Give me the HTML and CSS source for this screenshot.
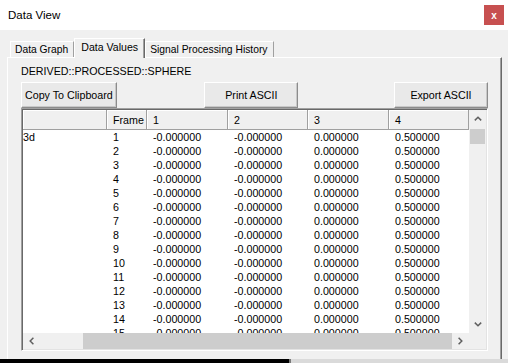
FILE: index.html
```html
<!DOCTYPE html>
<html lang="en">
<head>
    <meta charset="UTF-8">
    <title>Data View</title>
    <link rel="stylesheet" href="styles.css">
</head>
<body>
    <div class="window">
        <div class="titlebar">
            <span class="title">Data View</span>
            <span class="close">x</span>
        </div>

        <div class="client">
            <div class="tabs">
                <div class="tab">Data Graph</div>
                <div class="tab active">Data Values</div>
                <div class="tab">Signal Processing History</div>
            </div>

            <div class="panel">
                <div class="path">DERIVED::PROCESSED::SPHERE</div>

                <div class="toolbar">
                    <button class="btn">Copy To Clipboard</button>
                    <button class="btn print">Print ASCII</button>
                    <button class="btn">Export ASCII</button>
                </div>

                <div class="grid">
                    <div class="grid-main">
                        <div class="grid-view">
                            <table class="values">
                                <colgroup>
                                    <col class="c-name">
                                    <col class="c-frame">
                                    <col class="c-val">
                                    <col class="c-val">
                                    <col class="c-val">
                                    <col class="c-val">
                                </colgroup>
                                <thead>
                                    <tr><th></th><th>Frame</th><th>1</th><th>2</th><th>3</th><th>4</th></tr>
                                </thead>
                                <tbody>
                                    <tr><td>3d</td><td>1</td><td>-0.000000</td><td>-0.000000</td><td>0.000000</td><td>0.500000</td></tr>
                                    <tr><td></td><td>2</td><td>-0.000000</td><td>-0.000000</td><td>0.000000</td><td>0.500000</td></tr>
                                    <tr><td></td><td>3</td><td>-0.000000</td><td>-0.000000</td><td>0.000000</td><td>0.500000</td></tr>
                                    <tr><td></td><td>4</td><td>-0.000000</td><td>-0.000000</td><td>0.000000</td><td>0.500000</td></tr>
                                    <tr><td></td><td>5</td><td>-0.000000</td><td>-0.000000</td><td>0.000000</td><td>0.500000</td></tr>
                                    <tr><td></td><td>6</td><td>-0.000000</td><td>-0.000000</td><td>0.000000</td><td>0.500000</td></tr>
                                    <tr><td></td><td>7</td><td>-0.000000</td><td>-0.000000</td><td>0.000000</td><td>0.500000</td></tr>
                                    <tr><td></td><td>8</td><td>-0.000000</td><td>-0.000000</td><td>0.000000</td><td>0.500000</td></tr>
                                    <tr><td></td><td>9</td><td>-0.000000</td><td>-0.000000</td><td>0.000000</td><td>0.500000</td></tr>
                                    <tr><td></td><td>10</td><td>-0.000000</td><td>-0.000000</td><td>0.000000</td><td>0.500000</td></tr>
                                    <tr><td></td><td>11</td><td>-0.000000</td><td>-0.000000</td><td>0.000000</td><td>0.500000</td></tr>
                                    <tr><td></td><td>12</td><td>-0.000000</td><td>-0.000000</td><td>0.000000</td><td>0.500000</td></tr>
                                    <tr><td></td><td>13</td><td>-0.000000</td><td>-0.000000</td><td>0.000000</td><td>0.500000</td></tr>
                                    <tr><td></td><td>14</td><td>-0.000000</td><td>-0.000000</td><td>0.000000</td><td>0.500000</td></tr>
                                    <tr><td></td><td>15</td><td>-0.000000</td><td>-0.000000</td><td>0.000000</td><td>0.500000</td></tr>
                                </tbody>
                            </table>
                        </div>

                        <div class="vscroll">
                            <div class="arrow">
                                <svg width="8" height="5" viewBox="0 0 8 5"><polyline points="0.8,4.4 4,1.2 7.2,4.4"/></svg>
                            </div>
                            <div class="vtrack"><div class="vthumb"></div></div>
                            <div class="arrow">
                                <svg width="8" height="5" viewBox="0 0 8 5"><polyline points="0.8,0.6 4,3.8 7.2,0.6"/></svg>
                            </div>
                        </div>
                    </div>

                    <div class="hscroll-row">
                        <div class="hscroll">
                            <div class="arrow">
                                <svg width="5" height="8" viewBox="0 0 5 8"><polyline points="4.4,0.8 1.2,4 4.4,7.2"/></svg>
                            </div>
                            <div class="htrack"><div class="hthumb"></div></div>
                            <div class="arrow">
                                <svg width="5" height="8" viewBox="0 0 5 8"><polyline points="0.6,0.8 3.8,4 0.6,7.2"/></svg>
                            </div>
                        </div>
                        <div class="corner"></div>
                    </div>
                </div>
            </div>
        </div>

        <div class="taskbar">
            <div class="task-dark"></div>
            <div class="task-edge"></div>
        </div>
    </div>
</body>
</html>
```

FILE: styles.css
```css
body {
    margin: 0;
    background: #f0f0f0;
    font-family: "Liberation Sans", Arial, sans-serif;
    font-size: 10.7px;
    color: #000;
}

.window {
    height: 363px;
    display: flex;
    flex-direction: column;
    overflow: hidden;
}

/* Title bar */
.titlebar {
    height: 30px;
    flex: none;
    background: #fff;
    display: flex;
    align-items: center;
    justify-content: space-between;
    padding: 0 4px 0 8px;
}

.title {
    font-size: 11.5px;
}

.close {
    width: 20px;
    height: 20px;
    background: #c75050;
    color: #fff;
    font-size: 10px;
    font-weight: bold;
    display: flex;
    align-items: center;
    justify-content: center;
}

/* Client area */
.client {
    flex: 1;
    min-height: 0;
    display: flex;
    flex-direction: column;
    padding: 8px 6px 0 7px;
}

.tabs {
    height: 19px;
    flex: none;
    display: flex;
    align-items: flex-end;
    padding-left: 3px;
    font-size: 10.3px;
}

.tab {
    height: 15px;
    line-height: 15px;
    padding: 0 5px 0 4px;
    border-top: 1px solid #fff;
    border-left: 1px solid #fff;
    border-right: 1px solid #a0a0a0;
    white-space: nowrap;
}

.tab.active {
    position: relative;
    z-index: 1;
    height: 18px;
    padding: 1px 6px 0 6px;
    margin-bottom: -1px;
    font-size: 10.6px;
    background: #f0f0f0;
    border-right-color: #696969;
    box-shadow: inset -1px 0 #a0a0a0;
}

.panel {
    flex: 1;
    min-height: 0;
    display: flex;
    flex-direction: column;
    padding: 7px 13px 8px 13px;
    border-top: 1px solid #fff;
    border-left: 1px solid #fff;
    border-right: 1px solid #696969;
    box-shadow: inset -1px 0 #a0a0a0;
}

.path {
    line-height: 13px;
}

.toolbar {
    margin-top: 4px;
    display: flex;
    justify-content: space-between;
}

.btn {
    font-family: inherit;
    font-size: inherit;
    color: #000;
    height: 26px;
    min-width: 94px;
    padding: 0 3px;
    background: #e9e9e9;
    border: 1px solid;
    border-color: #fff #8c8c8c #8c8c8c #fff;
    box-shadow: inset -1px -1px #c8c8c8;
}

.btn.print {
    margin-right: 8px;
}

/* Data grid */
.grid {
    flex: 1;
    min-height: 0;
    display: flex;
    flex-direction: column;
    padding: 1px;
    border: 1px solid;
    border-color: #a0a0a0 #fff #fff #a0a0a0;
    box-shadow: inset 1px 1px #696969, inset -1px -1px #e3e3e3;
}

.grid-main {
    flex: 1;
    min-height: 0;
    display: flex;
}

.grid-view {
    width: 446px;
    background: #fff;
    overflow: hidden;
}

.values {
    width: 446px;
    table-layout: fixed;
    border-collapse: separate;
    border-spacing: 0;
}

.c-name { width: 84px; }
.c-frame { width: 40px; }
.c-val { width: 80px; }
.c-val:nth-child(3),
.c-val:nth-child(5) { width: 81px; }

.values th {
    height: 19px;
    padding: 1px 0 0 6px;
    box-sizing: border-box;
    font-weight: normal;
    text-align: left;
    background: #f0f0f0;
    border-right: 1px solid #a0a0a0;
    border-bottom: 1px solid #a0a0a0;
    box-shadow: inset 1px 1px #fff;
}

.values th:first-child {
    height: 20px;
}

.values td {
    height: 14px;
    line-height: 14px;
    padding: 0 0 0 6px;
    white-space: nowrap;
    overflow: hidden;
}

.values td:first-child {
    padding-left: 0;
}

/* Scroll bars */
.vscroll {
    width: 17px;
    background: #f0f0f0;
    display: flex;
    flex-direction: column;
}

.arrow {
    width: 17px;
    height: 17px;
    flex: none;
    display: flex;
    align-items: center;
    justify-content: center;
}

.hscroll .arrow {
    height: 16px;
}

.arrow polyline {
    fill: none;
    stroke: #606060;
    stroke-width: 1.5;
}

.vtrack {
    flex: 1;
}

.vthumb {
    height: 15px;
    margin: 2px 1px 0 1px;
    background: #cdcdcd;
}

.hscroll-row {
    height: 16px;
    flex: none;
    display: flex;
}

.hscroll {
    flex: 1;
    display: flex;
    background: #f0f0f0;
}

.htrack {
    flex: 1;
    display: flex;
    padding-left: 43px;
}

.hthumb {
    flex: 1;
    background: #cdcdcd;
}

.corner {
    width: 17px;
    background: #f0f0f0;
}

/* Strip of the window behind */
.taskbar {
    height: 4px;
    flex: none;
    display: flex;
    background: #dadada;
}

.task-dark {
    width: 289px;
    background: #000;
}

.task-edge {
    width: 2px;
    background: #7a7a7a;
}
```
